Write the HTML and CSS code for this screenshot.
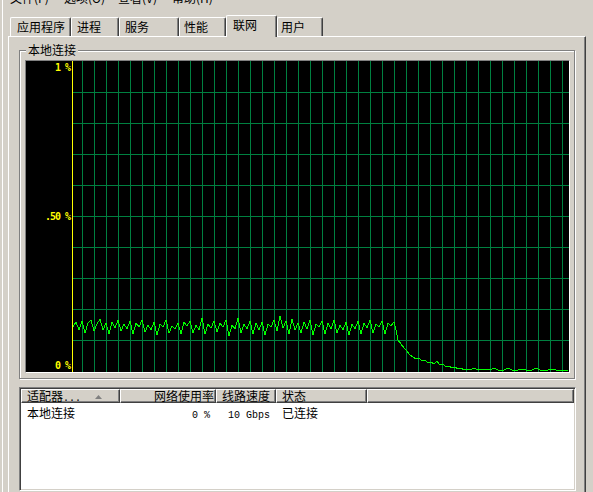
FILE: index.html
```html
<!DOCTYPE html>
<html lang="zh-CN">
  <head>
    <meta charset="UTF-8" />
    <meta name="viewport" content="width=device-width, initial-scale=1.0" />
    <title>Windows 任务管理器</title>
    <link rel="stylesheet" href="styles.css">
  </head>
  <body>
    <div class="window">
      <div class="menubar">
        <span>文件(F)</span><span>选项(O)</span><span>查看(V)</span><span>帮助(H)</span>
      </div>

      <div class="tabs">
        <div class="tab tab-apps">应用程序</div>
        <div class="tab tab-proc">进程</div>
        <div class="tab tab-svc">服务</div>
        <div class="tab tab-perf">性能</div>
        <div class="tab tab-net active">联网</div>
        <div class="tab tab-user">用户</div>
      </div>

      <div class="panel">
        <div class="group">
          <span class="group-label">本地连接</span>
          <div class="graph">
            <div class="scale">
              <span>1 %</span>
              <span>.50 %</span>
              <span>0 %</span>
            </div>
            <div class="axis"></div>
            <svg class="plot" width="496" height="311" viewBox="73 61 496 311">
              <!-- 网格 -->
              <path class="grid" d="M73 92.5h496m-496 31h496m-496 31h496m-496 31h496m-496 31h496m-496 31h496m-496 31h496m-496 31h496m-496 31h496" />
              <path class="grid" d="M82.5 61v311m12-311v311m12-311v311m12-311v311m12-311v311m12-311v311m12-311v311m12-311v311m12-311v311m12-311v311m12-311v311m12-311v311m12-311v311m12-311v311m12-311v311m12-311v311m12-311v311m12-311v311m12-311v311m12-311v311m12-311v311m12-311v311m12-311v311m12-311v311m12-311v311m12-311v311m12-311v311m12-311v311m12-311v311m12-311v311m12-311v311m12-311v311m12-311v311m12-311v311m12-311v311m12-311v311m12-311v311m12-311v311m12-311v311m12-311v311m12-311v311" />
              <!-- 网络使用率曲线 -->
              <polyline class="trace" points="73,327 76,322 79,330 82,321 85,333 88,323 91,320 94,331 97,324 100,319 103,330 106,323 109,334 112,322 115,328 118,320 121,331 124,324 127,329 130,321 133,334 136,323 139,327 142,320 145,332 148,325 151,330 154,322 157,335 160,324 163,327 166,320 169,333 172,326 175,329 178,323 181,334 184,322 187,326 190,321 193,333 196,325 199,330 202,318 205,334 208,324 211,328 214,321 217,332 220,323 223,327 226,320 229,336 232,325 235,329 238,318 241,333 244,324 247,329 250,321 253,334 256,323 259,330 262,322 265,335 268,324 271,327 274,320 277,331 280,316 283,328 286,321 289,334 292,319 295,330 298,323 301,333 304,322 307,329 310,320 313,335 316,324 319,327 322,321 325,334 328,323 331,329 334,320 337,333 340,325 343,330 346,322 349,335 352,324 355,329 358,321 361,334 364,323 367,328 370,320 373,333 376,324 379,327 382,321 385,334 388,323 391,326 394,322 396,330 398,340 401,344 404,348 407,351 410,355 413,357 416,359 419,358 422,361 425,360 428,363 431,362 434,364 437,361 440,365 443,364 446,367 449,366 452,368 455,367 458,369 461,368 464,370 467,369 470,370 474,368 478,370 484,369 490,370 494,368 498,370 504,370 508,368 512,370 518,370 522,369 526,370 532,370 536,368 540,370 548,370 552,369 556,370 568,370" />
            </svg>
          </div>
        </div>

        <div class="list">
          <div class="list-head">
            <div class="col col-name">适配器<span class="mono">...</span><svg class="sort" width="7" height="4" viewBox="0 0 7 4"><polygon points="3.5,0 7,4 0,4" /></svg></div>
            <div class="col col-use right">网络使用率</div>
            <div class="col col-speed">线路速度</div>
            <div class="col col-state">状态</div>
            <div class="col col-rest"></div>
          </div>
          <div class="list-row">
            <div class="cell col-name">本地连接</div>
            <div class="cell col-use right"><span class="mono">0 %</span></div>
            <div class="cell col-speed right"><span class="mono">10 Gbps</span></div>
            <div class="cell col-state">已连接</div>
          </div>
        </div>
      </div>
    </div>
  </body>
</html>
```

FILE: styles.css
```css
* {
  box-sizing: border-box;
}

body {
  margin: 0;
  background-color: #d4d0c8;
  font-family: "Noto Sans CJK SC", sans-serif;
  font-size: 12px;
  color: #000;
  overflow: hidden;
}

/* 窗口主体 */
.window {
  display: flex;
  flex-direction: column;
  height: 492px;
  margin-left: 2px;
  border-left: 1px solid #fff;
  overflow: hidden;
}

/* 菜单栏只露出下半截 */
.menubar {
  height: 12px;
  margin-top: -8px;
  padding-left: 7px;
  line-height: 12px;
  white-space: nowrap;
}

.menubar span {
  display: inline-block;
  width: 54px;
}

/* 选项卡 */
.tabs {
  display: flex;
  align-items: flex-end;
  height: 21px;
  margin-top: 11px;
  margin-left: 7px;
}

.tab {
  height: 19px;
  padding-top: 3px;
  line-height: 12px;
  white-space: nowrap;
  border-top: 1px solid #fff;
  border-left: 1px solid #fff;
  border-right: 1px solid #404040;
  border-radius: 2px 2px 0 0;
  box-shadow: inset -1px 0 0 #808080;
}

.tab.active {
  position: relative;
  z-index: 1;
  height: 22px;
  margin-bottom: -1px;
  background-color: #d4d0c8;
}

.tab-apps { width: 61px; padding-left: 6px; }
.tab-proc { width: 48px; padding-left: 5px; }
.tab-svc  { width: 60px; padding-left: 5px; }
.tab-perf { width: 47px; padding-left: 4px; }
.tab-net  { width: 51px; padding-left: 6px; }
.tab-user { width: 46px; padding-left: 3px; }

.panel {
  flex: 1;
  width: 578px;
  margin-left: 5px;
  padding: 13px 0 0 10px;
  border-top: 1px solid #fff;
  border-left: 1px solid #fff;
  border-right: 1px solid #404040;
  box-shadow: inset -1px 0 0 #808080;
}

/* 分组框 */
.group {
  position: relative;
  width: 556px;
  padding: 9px 0 5px 5px;
  border: 1px solid #808080;
  box-shadow: inset 1px 1px 0 #fff, 1px 1px 0 #fff;
}

.group-label {
  position: absolute;
  top: -7px;
  left: 6px;
  padding: 0 2px;
  line-height: 12px;
  background-color: #d4d0c8;
}

/* 图表 */
.graph {
  display: flex;
  width: 545px;
  height: 313px;
  border: 1px solid;
  border-color: #808080 #fff #fff #808080;
  background-color: #000;
}

.scale {
  width: 46px;
  display: flex;
  flex-direction: column;
  justify-content: space-between;
  align-items: flex-end;
  padding: 3px 2px 2px 0;
  color: #ff0;
  font-family: "DejaVu Sans Mono", monospace;
  font-weight: bold;
  font-size: 10px;
  letter-spacing: -1px;
  line-height: 8px;
  white-space: pre;
}

.axis {
  width: 1px;
  background-color: #ff0;
}

.plot {
  display: block;
}

.grid {
  fill: none;
  stroke: #008040;
  stroke-width: 1;
}

.trace {
  fill: none;
  stroke: #00ff00;
  stroke-width: 1;
  shape-rendering: crispEdges;
}

/* 适配器列表 */
.list {
  width: 557px;
  height: 104px;
  margin-top: 8px;
  padding: 1px;
  border: 1px solid;
  border-color: #808080 #fff #fff #808080;
  box-shadow: inset 1px 1px 0 #404040, inset -1px -1px 0 #d4d0c8;
  background-color: #fff;
}

.list-head {
  display: flex;
  height: 14px;
  background-color: #d4d0c8;
}

.col {
  height: 14px;
  padding: 0 5px;
  line-height: 12px;
  white-space: nowrap;
  overflow: hidden;
  border-top: 1px solid #fff;
  border-left: 1px solid #fff;
  border-right: 1px solid #404040;
  border-bottom: 1px solid #404040;
  box-shadow: inset -1px -1px 0 #808080;
}

.col.right {
  text-align: right;
  padding-right: 1px;
}

.col-name  { width: 99px; }
.col-use   { width: 96px; }
.col-speed { width: 60px; }
.col-state { width: 91px; }
.col-rest  { flex: 1; }

.sort {
  margin-left: 14px;
  vertical-align: 2px;
  fill: #808080;
}

.mono {
  font-family: "Liberation Mono", monospace;
  font-size: 10px;
  white-space: pre;
}

.list-row {
  display: flex;
  margin-top: 4px;
  line-height: 12px;
}

.cell {
  padding: 0 6px;
  white-space: nowrap;
}

.cell.right {
  text-align: right;
}
```
